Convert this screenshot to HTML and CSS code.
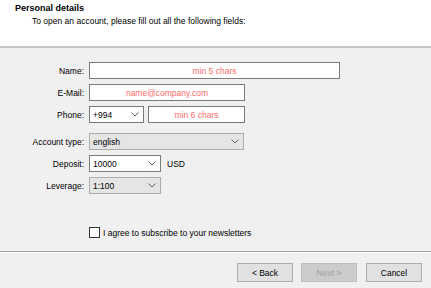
FILE: index.html
```html
<!DOCTYPE html>
<html>
<head>
    <meta charset="UTF-8">
    <title>Personal details</title>
    <link rel="stylesheet" href="styles.css">
</head>
<body>
    <div class="header">
        <div class="title">Personal details</div>
        <div class="subtitle">To open an account, please fill out all the following fields:</div>
    </div>

    <div class="form">
        <div class="row">
            <span class="label">Name:</span>
            <div class="edit w-name">min 5 chars</div>
        </div>
        <div class="row">
            <span class="label">E-Mail:</span>
            <div class="edit w-mail">name@company.com</div>
        </div>
        <div class="row">
            <span class="label">Phone:</span>
            <div class="combo w-code">+994
                <svg class="arrow" width="8" height="5" viewBox="0 0 8 5"><polyline points="0.5,0.5 4,4 7.5,0.5" /></svg>
            </div>
            <div class="edit w-phone">min 6 chars</div>
        </div>

        <div class="row gap-top">
            <span class="label">Account type:</span>
            <div class="combo locked w-type">english
                <svg class="arrow" width="8" height="5" viewBox="0 0 8 5"><polyline points="0.5,0.5 4,4 7.5,0.5" /></svg>
            </div>
        </div>
        <div class="row">
            <span class="label">Deposit:</span>
            <div class="combo w-small">10000
                <svg class="arrow" width="8" height="5" viewBox="0 0 8 5"><polyline points="0.5,0.5 4,4 7.5,0.5" /></svg>
            </div>
            <span class="unit">USD</span>
        </div>
        <div class="row">
            <span class="label">Leverage:</span>
            <div class="combo locked w-small">1:100
                <svg class="arrow" width="8" height="5" viewBox="0 0 8 5"><polyline points="0.5,0.5 4,4 7.5,0.5" /></svg>
            </div>
        </div>

        <div class="row check-row">
            <span class="label"></span>
            <span class="checkbox"></span>
            <span>I agree to subscribe to your newsletters</span>
        </div>
    </div>

    <div class="footer">
        <button class="btn">&lt; Back</button>
        <button class="btn" disabled>Next &gt;</button>
        <button class="btn cancel">Cancel</button>
    </div>
</body>
</html>
```

FILE: styles.css
```css
body {
    margin: 0;
    width: 431px;
    height: 288px;
    overflow: hidden;
    background: #f0f0f0;
    font-family: "Liberation Sans", Arial, sans-serif;
    font-size: 8.5px;
    color: #000;
    display: flex;
    flex-direction: column;
}

.header {
    height: 48px;
    flex-shrink: 0;
    background: #fff;
    border-bottom: 2px solid #c6c6c6;
    box-sizing: border-box;
    padding: 3px 0 0 15px;
}

.title {
    font-weight: bold;
    font-size: 9px;
}

.subtitle {
    margin: 3px 0 0 17px;
}

.form {
    flex: 1;
    display: flex;
    flex-direction: column;
    gap: 5px;
    padding-top: 14px;
}

.row {
    display: flex;
    align-items: center;
    height: 17px;
}

.gap-top {
    margin-top: 5px;
}

.label {
    width: 84px;
    margin-right: 5px;
    text-align: right;
    flex-shrink: 0;
}

.edit {
    height: 17px;
    box-sizing: border-box;
    border: 1px solid #7a7a7a;
    background: #fff;
    color: #ff6a6a;
    display: flex;
    align-items: center;
    justify-content: center;
}

.combo {
    height: 17px;
    box-sizing: border-box;
    border: 1px solid #7a7a7a;
    background: #fff;
    display: flex;
    align-items: center;
    padding: 0 4px 0 3px;
}

.combo.locked {
    background: #e5e5e5;
    border-color: #acacac;
}

.arrow {
    margin-left: auto;
    fill: none;
    stroke: #606060;
    stroke-width: 1;
}

.w-name { width: 251px; }
.w-mail { width: 156px; }
.w-code { width: 55px; }
.w-phone { width: 97px; margin-left: 4px; }
.w-type { width: 155px; }
.w-small { width: 72px; }

.unit {
    margin-left: 6px;
}

.check-row {
    margin-top: 25px;
}

.checkbox {
    width: 11px;
    height: 11px;
    box-sizing: border-box;
    border: 1px solid #333;
    background: #fff;
    margin-right: 3px;
}

.footer {
    height: 37px;
    flex-shrink: 0;
    box-sizing: border-box;
    border-top: 1px solid #a0a0a0;
    box-shadow: inset 0 1px 0 #fff;
    display: flex;
    justify-content: flex-end;
    align-items: flex-start;
    gap: 8px;
    padding: 11px 9px 0 0;
}

.btn {
    width: 56px;
    height: 19px;
    margin: 0;
    padding: 0;
    font-family: inherit;
    font-size: 8.5px;
    color: #000;
    background: #e1e1e1;
    border: 1px solid #adadad;
}

.btn:disabled {
    color: #a0a0a0;
    background: #cccccc;
    border-color: #bfbfbf;
}

.cancel {
    margin-left: 1px;
}
```
